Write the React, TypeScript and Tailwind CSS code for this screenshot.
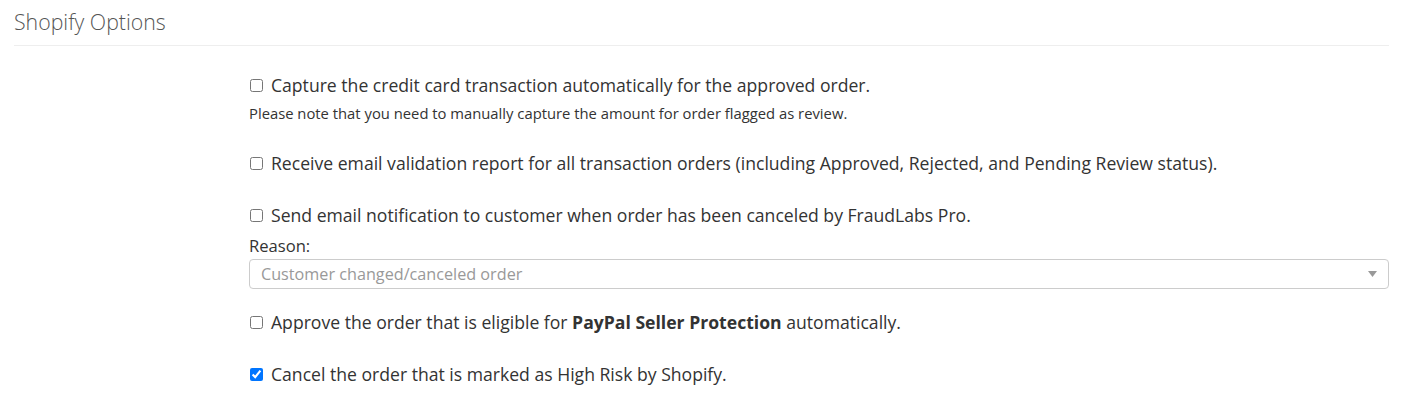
import { useState } from 'react';

const font = { fontFamily: '"Open Sans", "Noto Sans", sans-serif' };

function Option({
    checked,
    children,
}: {
    checked?: boolean;
    children: React.ReactNode;
}) {
    const [on, setOn] = useState(!!checked);
    return (
        <label className="flex items-center gap-[8px] text-[17.6px] leading-[24px] text-[#333]">
            <input
                type="checkbox"
                checked={on}
                onChange={() => setOn(!on)}
                className="w-[13px] h-[13px] m-0 ml-[1px] accent-[#0075ff]"
            />
            <span>{children}</span>
        </label>
    );
}

export default function App() {
    return (
        <div className="bg-white w-[1402px] h-[412px] pl-[14px] pr-[13px]" style={font}>
            {/* header */}
            <div className="pt-[8px] pb-[9px] border-b border-[#eee]">
                <h2 className="text-[21.3px] leading-[28px] font-light text-[#555]">Shopify Options</h2>
            </div>

            <div className="ml-[235px] pt-[27px]">
                <Option>Capture the credit card transaction automatically for the approved order.</Option>
                <p className="text-[14.8px] leading-[20px] text-[#333] mt-[6px]">
                    Please note that you need to manually capture the amount for order flagged as review.
                </p>

                <div className="mt-[28px]">
                    <Option>
                        Receive email validation report for all transaction orders (including Approved, Rejected, and Pending Review status).
                    </Option>
                </div>

                <div className="mt-[28px]">
                    <Option>Send email notification to customer when order has been canceled by FraudLabs Pro.</Option>
                    <div className="mt-[8px] text-[16.6px] leading-[22px] text-[#333]">Reason:</div>
                    <div className="mt-[2px] h-[30px] border border-[#ccc] rounded-[4px] flex items-center justify-between pl-[11px] pr-[11px]">
                        <span className="text-[16.2px] text-[#999]">Customer changed/canceled order</span>
                        <svg width="9" height="6" viewBox="0 0 9 6">
                            <path d="M0 0h9L4.5 6z" fill="#999" />
                        </svg>
                    </div>
                </div>

                <div className="mt-[21px]">
                    <Option>
                        Approve the order that is eligible for <b className="font-bold">PayPal Seller Protection</b> automatically.
                    </Option>
                </div>

                <div className="mt-[28px]">
                    <Option checked>Cancel the order that is marked as High Risk by Shopify.</Option>
                </div>
            </div>
        </div>
    );
}
